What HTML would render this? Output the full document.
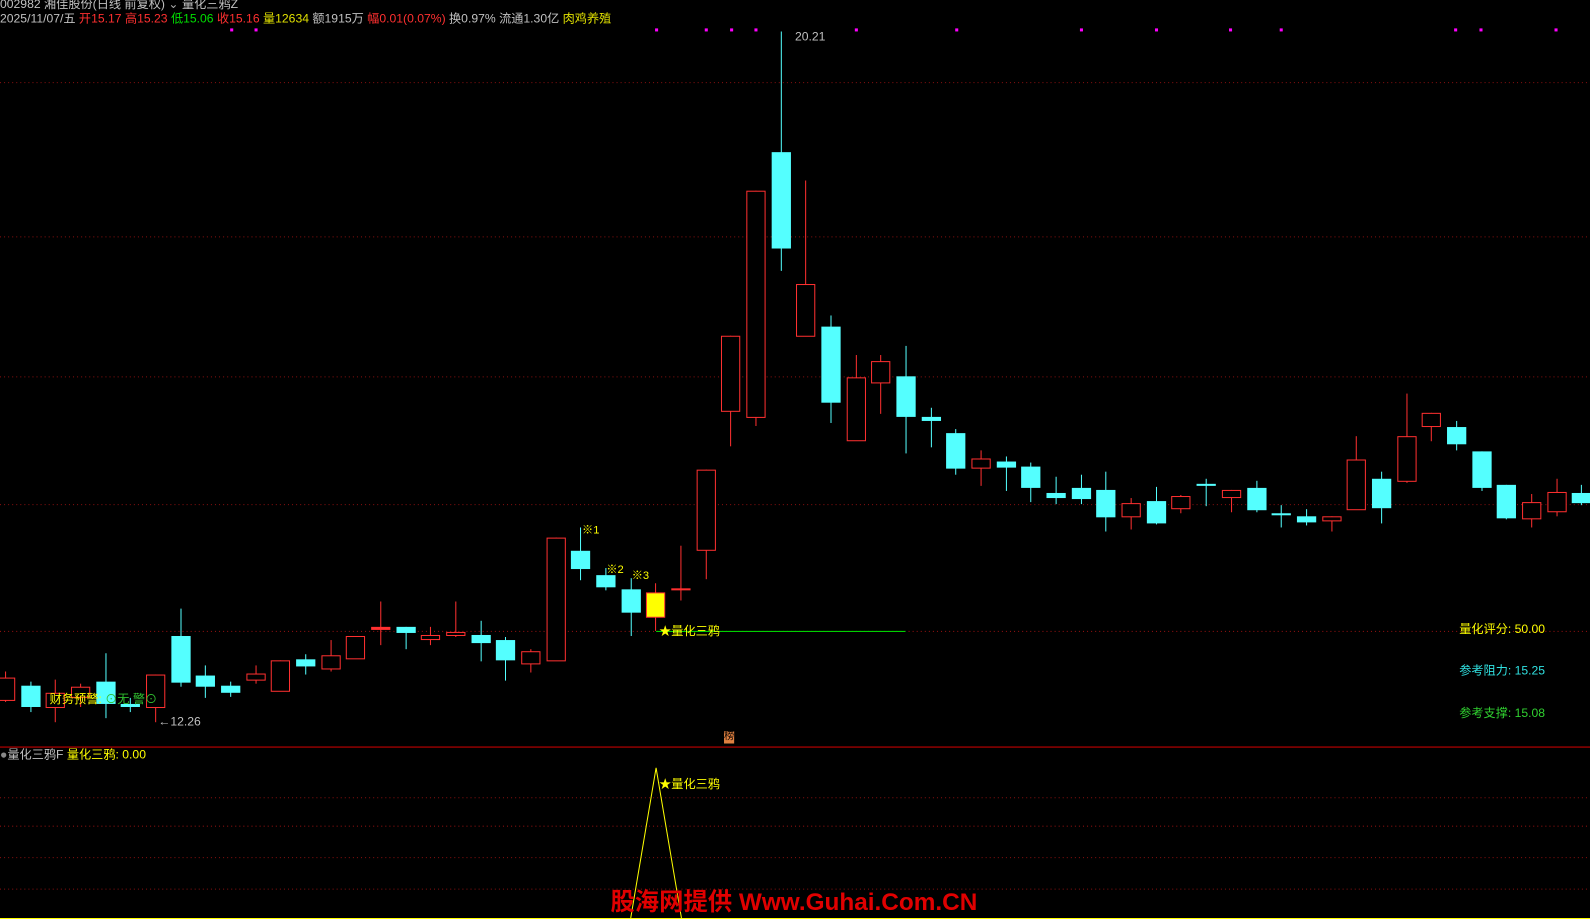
<!DOCTYPE html>
<html><head><meta charset="utf-8"><style>
html,body{margin:0;padding:0;background:#000;width:1590px;height:919px;overflow:hidden;font-family:"Liberation Sans","Noto Sans CJK SC",sans-serif;}
#w{position:absolute;left:0;top:0;width:1568px;height:906px;transform:scale(1.01403,1.01435);transform-origin:0 0;}
.t{position:absolute;font-size:12px;white-space:nowrap;line-height:14px;}
svg{position:absolute;left:0;top:0;}
</style></head><body><div id="w">
<svg id="s" width="1568" height="906" xmlns="http://www.w3.org/2000/svg">
<g stroke="#8a1010" stroke-dasharray="1,3" stroke-width="1">
<line x1="0" y1="81.5" x2="1568" y2="81.5"/><line x1="0" y1="233.5" x2="1568" y2="233.5"/>
<line x1="0" y1="371.5" x2="1568" y2="371.5"/><line x1="0" y1="497.5" x2="1568" y2="497.5"/>
<line x1="0" y1="622.5" x2="1568" y2="622.5"/>
<line x1="0" y1="786.5" x2="1568" y2="786.5"/><line x1="0" y1="814.5" x2="1568" y2="814.5"/>
<line x1="0" y1="845.5" x2="1568" y2="845.5"/><line x1="0" y1="876.5" x2="1568" y2="876.5"/>
</g>
<line x1="0" y1="736.5" x2="1568" y2="736.5" stroke="#c00000" stroke-width="1"/>
<line x1="647" y1="622.5" x2="893" y2="622.5" stroke="#00d000"/>
<polyline points="622,905 647,757 672,905" fill="none" stroke="#ffff00" stroke-width="1"/>
<line x1="0" y1="905.5" x2="1568" y2="905.5" stroke="#ffff00"/>
<g id="c"></g>
</svg>
<div class="t" style="left:0;top:-3px;color:#c0c0c0">002982 湘佳股份(日线 前复权) <span style="color:#aaa">⌄</span> 量化三鸦Z</div>
<div class="t" style="left:0;top:11px;color:#c0c0c0">2025/11/07/五 <span style="color:#ff3030">开15.17</span> <span style="color:#ff3030">高15.23</span> <span style="color:#00e000">低15.06</span> <span style="color:#ff3030">收15.16</span> <span style="color:#e0e000">量12634</span> 额1915万 <span style="color:#ff3030">幅0.01(0.07%)</span> 换0.97% 流通1.30亿 <span style="color:#e0e000">肉鸡养殖</span></div>
<div class="t" style="left:784px;top:29px;color:#c0c0c0">20.21</div>
<div class="t" style="left:156px;top:704px;color:#c0c0c0">←12.26</div>
<div class="t" style="left:49px;top:682px;color:#ffff00">财务预警: <span style="color:#30c030">⊙无 警⊙</span></div>
<div class="t" style="left:574px;top:516px;color:#ffff00;font-size:11px">※1</div>
<div class="t" style="left:598px;top:555px;color:#ffff00;font-size:11px">※2</div>
<div class="t" style="left:623px;top:561px;color:#ffff00;font-size:11px">※3</div>
<div class="t" style="left:650px;top:615px;color:#ffff00">★量化三鸦</div>
<div class="t" style="left:650px;top:766px;color:#ffff00">★量化三鸦</div>
<div class="t" style="left:714px;top:721px;color:#000;background:#e08040;font-size:10px;line-height:12px">榜</div>
<div class="t" style="left:1439px;top:613px;color:#ffff00">量化评分: 50.00</div>
<div class="t" style="left:1439px;top:654px;color:#30e0e0">参考阻力: 15.25</div>
<div class="t" style="left:1439px;top:696px;color:#30d030">参考支撑: 15.08</div>
<div class="t" style="left:0;top:737px;color:#c0c0c0"><span style="color:#888">●</span>量化三鸦F <span style="color:#ffff00">量化三鸦: 0.00</span></div>
<div class="t" style="left:602px;top:876px;color:#e00000;font-size:24px;line-height:28px;font-weight:bold">股海网提供 Www.Guhai.Com.CN</div>
</div>
<script>
var d=[
['r',662,668,690,692],['c',672,676,697,702],['r',670,683,697,712],['r',674,677,687,697],['c',644,672,694,708],['c',688,694,697,702],['r',665,665,697,712],['c',600,627,673,677],['c',656,666,677,688],['c',672,676,683,687],['r',656,664,670,674],['r',651,651,681,681],['c',645,650,657,665],['r',631,646,659,662],['r',627,627,649,649],['R',593,618,621,636],['c',618,618,624,640],['r',618,626,630,636],['r',593,623,626,628],['c',612,626,634,652],['c',628,631,651,671],['r',640,642,654,663],['r',530,530,651,651],['c',520,543,561,572],['c',560,567,579,582],['c',570,581,604,627],['y',575,584,608,622],['R',538,580,582,592],['r',463,463,542,571],['r',331,331,405,440],['r',188,188,411,420],['c',31,150,245,267],['r',178,280,331,331],['c',311,322,397,417],['r',350,372,434,434],['r',350,356,377,408],['c',341,371,411,447],['c',402,411,415,441],['c',423,427,462,468],['r',444,452,461,479],['c',450,455,461,484],['c',456,460,481,495],['c',470,486,491,497],['c',468,481,492,497],['c',465,483,510,524],['r',491,496,509,522],['c',480,494,516,517],['r',488,489,501,506],['c',472,477,479,499],['r',483,483,490,505],['c',474,481,503,505],['c',498,506,508,520],['c',502,509,515,518],['r',509,509,513,524],['r',430,453,502,502],['c',465,472,501,516],['r',388,430,474,476],['r',407,407,420,435],['c',415,421,438,444],['c',445,445,481,484],['c',478,478,511,512],['r',487,495,511,520],['r',472,485,504,509],['c',478,486,496,498]];
var g=document.getElementById('c'),h='';
d.forEach(function(a,i){var x=Math.round(5+i*24.67),t=a[0];
var col=t=='c'?'#54ffff':'#ff3030';
h+='<line x1="'+(x+.5)+'" y1="'+a[1]+'" x2="'+(x+.5)+'" y2="'+a[4]+'" stroke="'+col+'"/>';
var hgt=Math.max(a[3]-a[2],2);
if(t=='c')h+='<rect x="'+(x-9)+'" y="'+a[2]+'" width="19" height="'+hgt+'" fill="#54ffff"/>';
else if(t=='y')h+='<rect x="'+(x-8.5)+'" y="'+(a[2]+.5)+'" width="18" height="'+hgt+'" fill="#ffff00" stroke="#ff3030"/>';
else if(t=='R')h+='<rect x="'+(x-9)+'" y="'+a[2]+'" width="19" height="'+hgt+'" fill="#ff3030"/>';
else h+='<rect x="'+(x-8.5)+'" y="'+(a[2]+.5)+'" width="18" height="'+hgt+'" fill="#000" stroke="#ff3030"/>';
});
[228,252,647,696,721,745,844,943,1066,1140,1213,1263,1435,1460,1534].forEach(function(x){h+='<rect x="'+(x-1)+'" y="28" width="3" height="3" fill="#ff00ff"/>';});
g.innerHTML=h;
</script>
</body></html>
